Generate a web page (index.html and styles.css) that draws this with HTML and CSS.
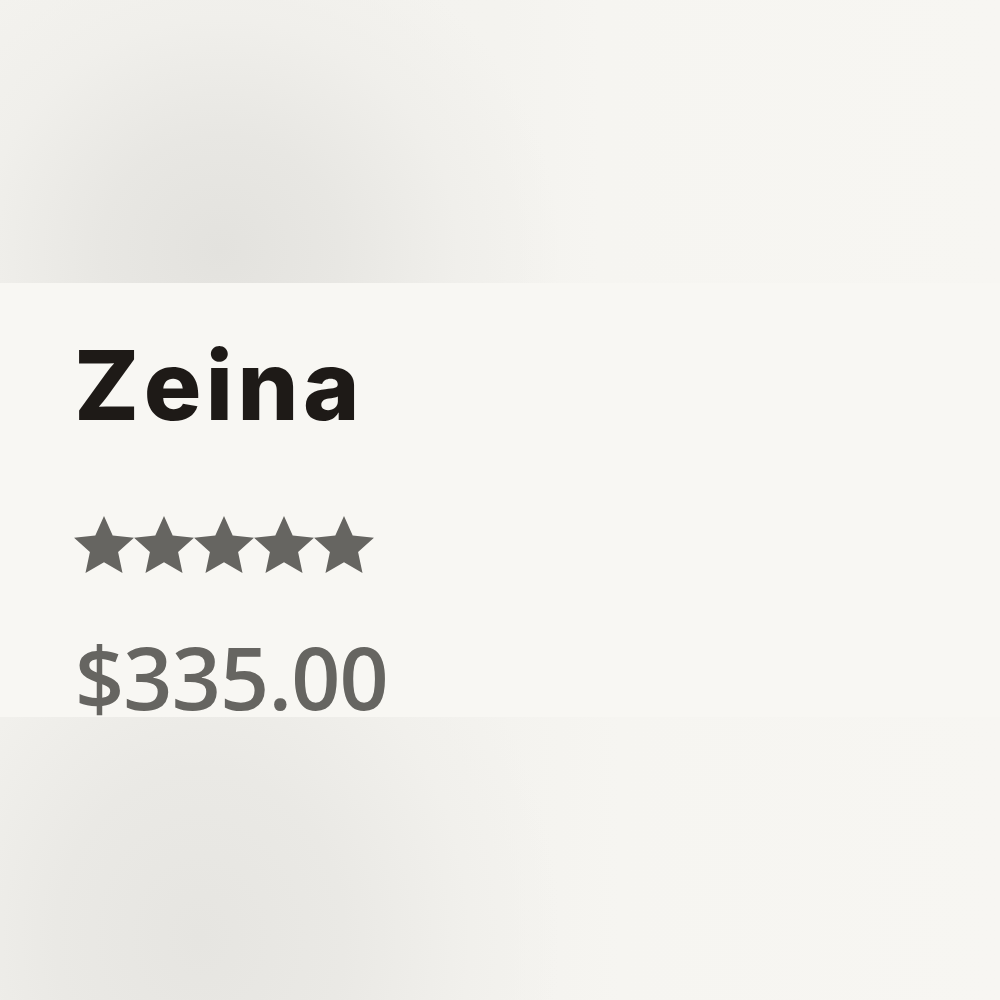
FILE: index.html
```html
<!DOCTYPE html>
<html>
<head>
<meta charset="utf-8">
<link rel="stylesheet" href="styles.css">
</head>
<body>
<div class="page">
  <div class="media media-top"></div>
  <div class="info">
    <h1 class="title">Zeina</h1>
    <div class="rating" aria-label="5 out of 5 stars">
      <svg class="stars" width="302" height="58" viewBox="0 0 302 58">
        <defs>
          <polygon id="star" points="30,0 38.70,19.53 59.96,21.77 44.08,36.07 48.51,56.98 30,46.3 11.49,56.98 15.92,36.07 0.04,21.77 21.30,19.53"/>
        </defs>
        <use href="#star" x="0" y="0"/>
        <use href="#star" x="60" y="0"/>
        <use href="#star" x="120" y="0"/>
        <use href="#star" x="180" y="0"/>
        <use href="#star" x="240" y="0"/>
      </svg>
    </div>
    <div class="price">$335.00</div>
  </div>
  <div class="media media-bottom"></div>
</div>
</body>
</html>
```
FILE: styles.css
```css
html, body {
  margin: 0;
  padding: 0;
}
body {
  background: #f7f6f2;
  width: 1000px;
  height: 1000px;
  overflow: hidden;
}
.page {
  display: flex;
  flex-direction: column;
  height: 1000px;
}
.media {
  flex: none;
}
.media-top {
  height: 283px;
  background:
    radial-gradient(ellipse 340px 330px at 220px 250px, #e3e2de 0%, #e8e7e3 35%, #f0efeb 70%, rgba(247,246,242,0) 100%),
    linear-gradient(90deg, #f3f2ee 0%, #f4f3ef 50%, #f6f5f1 60%, #f7f6f2 100%);
}
.media-bottom {
  height: 283px;
  background:
    radial-gradient(ellipse 360px 420px at 200px 220px, #e6e5e1 0%, #eae9e5 40%, #f1f0ec 75%, rgba(247,246,242,0) 100%),
    linear-gradient(90deg, #f3f2ee 0%, #f4f3ef 50%, #f6f5f1 62%, #f7f6f2 100%);
}
.info {
  height: 434px;
  flex: none;
  background: #f8f7f3;
  padding-left: 77px;
  box-sizing: border-box;
  display: flex;
  flex-direction: column;
}
.title {
  margin: 0;
  margin-top: 46px;
  margin-left: -3px;
  font-family: "Inter", "Liberation Sans", sans-serif;
  font-weight: 800;
  font-size: 96px;
  line-height: 112px;
  color: #1e1a17;
  letter-spacing: 4.5px;
}
.rating {
  margin-top: 75px;
  margin-left: -3px;
  height: 58px;
}
.stars {
  display: block;
  fill: #666561;
}
.price {
  margin-top: 58px;
  margin-left: -2px;
  font-family: "Open Sans", "Liberation Sans", sans-serif;
  font-weight: 550;
  font-size: 86px;
  line-height: 90px;
  letter-spacing: -0.8px;
  color: #666561;
}
```
